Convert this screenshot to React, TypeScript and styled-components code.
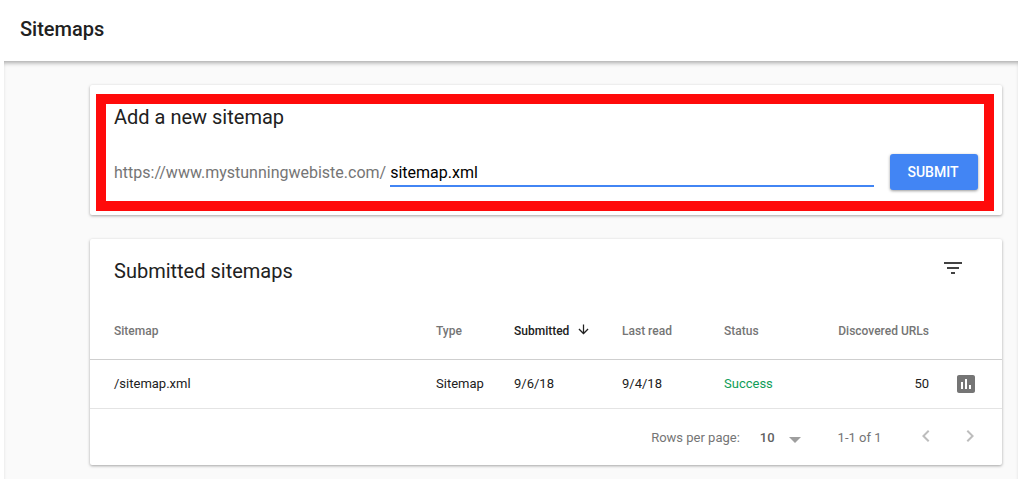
import styled, { createGlobalStyle } from 'styled-components';

const GlobalStyle = createGlobalStyle`
  html, body {
    margin: 0;
    padding: 0;
    background: #fff;
    font-family: Roboto, "Liberation Sans", sans-serif;
  }
`;

const Page = styled.div`
  width: 1020px;
  height: 485px;
  overflow: hidden;
  background: #fff;
`;

const TopBar = styled.header`
  height: 61px;
  display: flex;
  align-items: center;
  padding: 0 20px 3px;
  box-sizing: border-box;
`;

const PageTitle = styled.h1`
  margin: 0;
  font-size: 20px;
  line-height: 24px;
  font-weight: 500;
  color: #212121;
`;

const Main = styled.main`
  margin: 0 2px 0 4px;
  height: 418px;
  box-sizing: border-box;
  padding: 24px 16px 0 86px;
  display: flex;
  flex-direction: column;
  gap: 24px;
  background: #fafafa;
  box-shadow: inset 0 4px 4px -2px rgba(0, 0, 0, 0.32);
`;

const Card = styled.section`
  background: #fff;
  border-radius: 2px;
  box-shadow: 0 1px 3px rgba(0, 0, 0, 0.35);
`;

const AddCard = styled(Card)`
  height: 130px;
  box-sizing: border-box;
  padding: 9px 8px 4px 6px;
`;

const RedFrame = styled.div`
  height: 117px;
  box-sizing: border-box;
  border: 10px solid #ff0a0a;
  padding: 0 6px 11px 8px;
  display: flex;
  flex-direction: column;
  justify-content: space-between;
`;

const AddTitle = styled.h2`
  margin: 0;
  font-size: 20px;
  line-height: 26px;
  font-weight: 400;
  color: #212121;
`;

const FormRow = styled.div`
  display: flex;
  align-items: flex-end;
`;

const Prefix = styled.span`
  font-size: 16px;
  line-height: 20px;
  color: #757575;
  white-space: nowrap;
  margin-bottom: 7px;
`;

const Field = styled.div`
  flex: 1;
  margin: 0 16px 3px 4px;
  height: 27px;
  box-sizing: border-box;
  padding-top: 3px;
  border-bottom: 2px solid #4285f4;
  font-size: 16px;
  line-height: 20px;
  color: #000;
`;

const SubmitButton = styled.button`
  width: 88px;
  height: 36px;
  border: 0;
  padding: 0 2px 0 0;
  border-radius: 3px;
  background: #4285f4;
  color: #fff;
  font-family: inherit;
  font-size: 14px;
  font-weight: 500;
  box-shadow: 0 1px 3px rgba(0, 0, 0, 0.4);
`;

const TableCard = styled(Card)`
  height: 226px;
`;

const TableHead = styled.div`
  height: 64px;
  box-sizing: border-box;
  padding: 17px 37px 0 24px;
  display: flex;
  justify-content: space-between;
`;

const TableTitle = styled.h2`
  margin: 0;
  font-size: 20px;
  line-height: 30px;
  font-weight: 400;
  color: #212121;
`;

const IconSlot = styled.svg<{ $color?: string }>`
  display: block;
  flex: none;
  fill: ${(p) => p.$color || '#616161'};
`;

const Row = styled.div<{ $head?: boolean }>`
  display: grid;
  grid-template-columns: 322px 78px 108px 102px 80px 125px 73px;
  align-items: center;
  box-sizing: border-box;
  padding-left: 24px;
  height: ${(p) => (p.$head ? '57px' : '49px')};
  border-bottom: 1px solid ${(p) => (p.$head ? '#cfcfcf' : '#e4e4e4')};
`;

const HeadCell = styled.div<{ $active?: boolean; $right?: boolean }>`
  display: flex;
  align-items: center;
  gap: 7px;
  font-size: 12px;
  font-weight: 500;
  white-space: nowrap;
  justify-content: ${(p) => (p.$right ? 'flex-end' : 'flex-start')};
  color: ${(p) => (p.$active ? '#212121' : '#757575')};
`;

const SortMark = styled.span`
  display: block;
  margin-top: -3px;
`;

const Cell = styled.div<{ $right?: boolean; $success?: boolean }>`
  font-size: 13px;
  padding-bottom: 2px;
  text-align: ${(p) => (p.$right ? 'right' : 'left')};
  color: ${(p) => (p.$success ? '#0f9d58' : '#212121')};
`;

const ActionCell = styled.div`
  padding-left: 25px;
`;

const Footer = styled.div`
  height: 56px;
  box-sizing: border-box;
  padding: 0 20px 0 0;
  display: flex;
  align-items: center;
  justify-content: flex-end;
  color: #757575;
  font-size: 13px;
`;

const PerPage = styled.span`
  margin-left: 20px;
  font-size: 13px;
  font-weight: 500;
  color: #616161;
`;

const PageRange = styled.span`
  margin: 0 32px 0 37px;
`;

const Pager = styled.div`
  display: flex;
  gap: 20.5px;
  margin-top: -2px;
`;

const Caret = styled.svg`
  display: block;
  margin: 6px 0 0 14px;
  fill: #9e9e9e;
`;

const icons = {
  filter: 'M10 18h4v-2h-4v2zM3 6v2h18V6H3zm3 7h12v-2H6v2z',
  down: 'M20 12l-1.41-1.41L13 16.17V4h-2v12.17l-5.58-5.6L4 12l8 8 8-8z',
  bars: 'M19 3H5c-1.1 0-2 .9-2 2v14c0 1.1.9 2 2 2h14c1.1 0 2-.9 2-2V5c0-1.1-.9-2-2-2zM9 17H7v-7h2v7zm4 0h-2V7h2v10zm4 0h-2v-4h2v4z',
  left: 'M15.41 7.41L14 6l-6 6 6 6 1.41-1.41L10.83 12z',
  right: 'M10 6L8.59 7.41 13.17 12l-4.58 4.59L10 18l6-6z',
};

const Icon = ({ d, size = 24, color }: { d: string; size?: number; color?: string }) => (
  <IconSlot width={size} height={size} viewBox="0 0 24 24" $color={color}>
    <path d={d} />
  </IconSlot>
);

export default function App() {
  return (
    <Page>
      <GlobalStyle />
      <TopBar>
        <PageTitle>Sitemaps</PageTitle>
      </TopBar>
      <Main>
        <AddCard>
          <RedFrame>
            <AddTitle>Add a new sitemap</AddTitle>
            <FormRow>
              <Prefix>https://www.mystunningwebiste.com/</Prefix>
              <Field>sitemap.xml</Field>
              <SubmitButton>SUBMIT</SubmitButton>
            </FormRow>
          </RedFrame>
        </AddCard>
        <TableCard>
          <TableHead>
            <TableTitle>Submitted sitemaps</TableTitle>
            <Icon d={icons.filter} color="#424242" />
          </TableHead>
          <Row $head>
            <HeadCell>Sitemap</HeadCell>
            <HeadCell>Type</HeadCell>
            <HeadCell $active>
              Submitted
              <SortMark>
                <Icon d={icons.down} size={15} color="#212121" />
              </SortMark>
            </HeadCell>
            <HeadCell>Last read</HeadCell>
            <HeadCell>Status</HeadCell>
            <HeadCell $right>Discovered URLs</HeadCell>
          </Row>
          <Row>
            <Cell>/sitemap.xml</Cell>
            <Cell>Sitemap</Cell>
            <Cell>9/6/18</Cell>
            <Cell>9/4/18</Cell>
            <Cell $success>Success</Cell>
            <Cell $right>50</Cell>
            <ActionCell>
              <Icon d={icons.bars} color="#757575" />
            </ActionCell>
          </Row>
          <Footer>
            Rows per page:
            <PerPage>10</PerPage>
            <Caret width="12" height="6" viewBox="0 0 12 6">
              <polygon points="0,0 12,0 6,6" />
            </Caret>
            <PageRange>1-1 of 1</PageRange>
            <Pager>
              <Icon d={icons.left} color="#bdbdbd" />
              <Icon d={icons.right} color="#bdbdbd" />
            </Pager>
          </Footer>
        </TableCard>
      </Main>
    </Page>
  );
}
